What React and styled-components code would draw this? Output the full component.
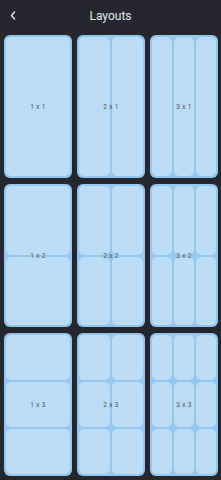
import React from "react";
import styled, { createGlobalStyle } from "styled-components";

const GlobalStyle = createGlobalStyle`
  html, body {
    margin: 0;
    padding: 0;
    background: #26272e;
  }
  body {
    font-family: Roboto, "Noto Sans", sans-serif;
  }
`;

const Page = styled.div`
  width: 221px;
  height: 480px;
  background: #26272e;
  display: flex;
  flex-direction: column;
  overflow: hidden;
`;

const Header = styled.div`
  height: 35px;
  display: flex;
  align-items: center;
  justify-content: center;
  position: relative;
  color: #e6e7ea;
  font-size: 12px;
  padding-bottom: 4px;
  box-sizing: border-box;
`;

const BackButton = styled.button`
  position: absolute;
  left: 7px;
  top: 8px;
  width: 12px;
  height: 14px;
  padding: 0;
  border: none;
  background: none;
  display: flex;
  align-items: center;
  justify-content: center;
  cursor: pointer;
`;

const Grid = styled.div`
  display: grid;
  grid-template-columns: repeat(3, 68px);
  grid-template-rows: repeat(3, 143px);
  column-gap: 5px;
  row-gap: 6px;
  padding: 0 5px 0 4px;
`;

const Card = styled.div`
  position: relative;
  background: #94c6ee;
  border-radius: 6px;
  padding: 2px;
  display: grid;
  grid-template-columns: repeat(${(p) => p.cols}, 1fr);
  grid-template-rows: repeat(${(p) => p.rows}, 1fr);
  gap: 2px;
  box-sizing: border-box;
`;

const Cell = styled.div`
  background: #bbdcf7;
  border-radius: 5px;
`;

const Label = styled.span`
  position: absolute;
  left: 0;
  right: 0;
  top: 50%;
  transform: translateY(-50%);
  text-align: center;
  font-size: 6.5px;
  color: #4d5156;
  letter-spacing: 0.3px;
`;

const layouts = [
  [1, 1], [2, 1], [3, 1],
  [1, 2], [2, 2], [3, 2],
  [1, 3], [2, 3], [3, 3],
];

export default function App() {
  return (
    <Page>
      <GlobalStyle />
      <Header>
        <BackButton aria-label="back">
          <svg width="6" height="9" viewBox="0 0 6 9">
            <path d="M4.5 1 L1.5 4.5 L4.5 8" fill="none" stroke="#e6e7ea" strokeWidth="1.4" strokeLinecap="round" strokeLinejoin="round" />
          </svg>
        </BackButton>
        Layouts
      </Header>
      <Grid>
        {layouts.map(([c, r]) => (
          <Card key={`${c}x${r}`} cols={c} rows={r}>
            {Array.from({ length: c * r }).map((_, i) => (
              <Cell key={i} />
            ))}
            <Label>{c} x {r}</Label>
          </Card>
        ))}
      </Grid>
    </Page>
  );
}
